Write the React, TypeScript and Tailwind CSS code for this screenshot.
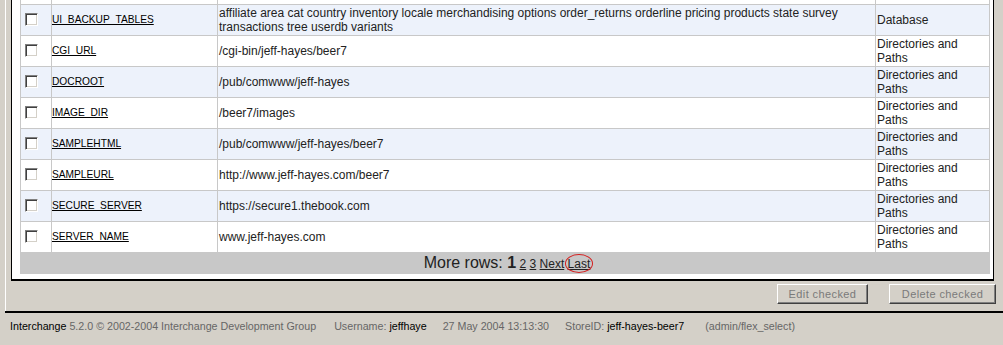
import React from "react";

interface Row {
  name: string;
  value: string;
  category: string;
}

const rows: Row[] = [
  {
    name: "UI_BACKUP_TABLES",
    value:
      "affiliate area cat country inventory locale merchandising options order_returns orderline pricing products state survey transactions tree userdb variants",
    category: "Database",
  },
  { name: "CGI_URL", value: "/cgi-bin/jeff-hayes/beer7", category: "Directories and Paths" },
  { name: "DOCROOT", value: "/pub/comwww/jeff-hayes", category: "Directories and Paths" },
  { name: "IMAGE_DIR", value: "/beer7/images", category: "Directories and Paths" },
  { name: "SAMPLEHTML", value: "/pub/comwww/jeff-hayes/beer7", category: "Directories and Paths" },
  { name: "SAMPLEURL", value: "http://www.jeff-hayes.com/beer7", category: "Directories and Paths" },
  { name: "SECURE_SERVER", value: "https://secure1.thebook.com", category: "Directories and Paths" },
  { name: "SERVER_NAME", value: "www.jeff-hayes.com", category: "Directories and Paths" },
];

function Checkbox() {
  return (
    <span className="block w-[13px] h-[13px] bg-white border border-t-[#808080] border-l-[#808080] border-b-white border-r-white shadow-[inset_1px_1px_0_#404040,inset_-1px_-1px_0_#d4d0c8]" />
  );
}

function Button({ label, width }: { label: string; width: string }) {
  return (
    <button
      className={`${width} h-[20px] bg-[#d4d0c8] border border-t-white border-l-white border-b-[#404040] border-r-[#404040] shadow-[inset_-1px_-1px_0_#808080] text-[11px] tracking-[0.4px] text-[#7a7a7a] leading-none`}
    >
      {label}
    </button>
  );
}

export default function App() {
  return (
    <div className="w-[1003px] h-[345px] overflow-hidden bg-[#d4d0c8] font-['Liberation_Sans',Arial,sans-serif] text-[#222]">
      <div className="ml-[5px]">
        {/* Frame */}
        <div className="border-l border-white pl-[5px] h-[311px]">
          {/* White panel */}
          <div className="w-[983px] bg-white border-l border-r border-b-2 border-black pl-[8px] pr-[4px] pb-[5px]">
            <table className="table-fixed border-collapse w-[969px] text-[12px] leading-[14px]">
              <colgroup>
                <col className="w-[31px]" />
                <col className="w-[166px]" />
                <col className="w-[658px]" />
                <col className="w-[114px]" />
              </colgroup>
              <tbody>
                <tr className="h-[4px]">
                  <td className="p-0 border-x border-[#c8c8c8]" />
                  <td className="p-0 border-x border-[#c8c8c8]" />
                  <td className="p-0 border-x border-[#c8c8c8]" />
                  <td className="p-0 border-x border-[#c8c8c8]" />
                </tr>
                {rows.map((row, i) => (
                  <tr
                    key={row.name}
                    className={`h-[31px] ${i % 2 === 0 ? "bg-[#edf2fb]" : "bg-white"}`}
                  >
                    <td className="border border-[#c8c8c8] pl-[4px] py-[1px] align-middle">
                      <Checkbox />
                    </td>
                    <td className="border border-[#c8c8c8] pl-0 py-[1px] align-middle">
                      <a className="underline text-[10.2px] text-black cursor-pointer">{row.name}</a>
                    </td>
                    <td className="border border-[#c8c8c8] pl-[1px] py-[1px] align-middle">
                      {row.value}
                    </td>
                    <td className="border border-[#c8c8c8] pl-[1px] py-[1px] align-middle">
                      {row.category}
                    </td>
                  </tr>
                ))}
                <tr className="h-[22px]">
                  <td colSpan={4} className="bg-[#c8c8c8] text-center align-middle p-0 pl-[4px] border-x border-[#c8c8c8]">
                    <span className="text-[16px] leading-[20px]">More rows: </span>
                    <span className="text-[16px] font-bold leading-[20px]">1</span>{" "}
                    <a className="underline cursor-pointer">2</a>{" "}
                    <a className="underline cursor-pointer">3</a>{" "}
                    <a className="underline cursor-pointer">Next</a>{" "}
                    <span className="relative">
                      <a className="underline cursor-pointer">Last</a>
                      <span className="absolute -left-[3px] -right-[3px] -top-[3px] -bottom-[2px] rounded-[50%] border border-[#d42020]" />
                    </span>
                  </td>
                </tr>
              </tbody>
            </table>
          </div>

          {/* Actions */}
          <div className="flex justify-end gap-[21px] pr-[7px] mt-[3px]">
            <Button label="Edit checked" width="w-[91px]" />
            <Button label="Delete checked" width="w-[107px]" />
          </div>
        </div>

        {/* Footer */}
        <div className="border-t-2 border-black pl-[5px] pt-[6px] text-[10.7px] leading-[14px] text-[#666] whitespace-nowrap">
          <span className="text-black">Interchange</span> 5.2.0 © 2002-2004 Interchange Development Group
          <span className="ml-[18px]">Username: </span>
          <span className="text-black">jeffhaye</span>
          <span className="ml-[16px]">27 May 2004 13:13:30</span>
          <span className="ml-[16px]">StoreID: </span>
          <span className="text-black">jeff-hayes-beer7</span>
          <span className="ml-[21px]">(admin/flex_select)</span>
        </div>
      </div>
    </div>
  );
}
